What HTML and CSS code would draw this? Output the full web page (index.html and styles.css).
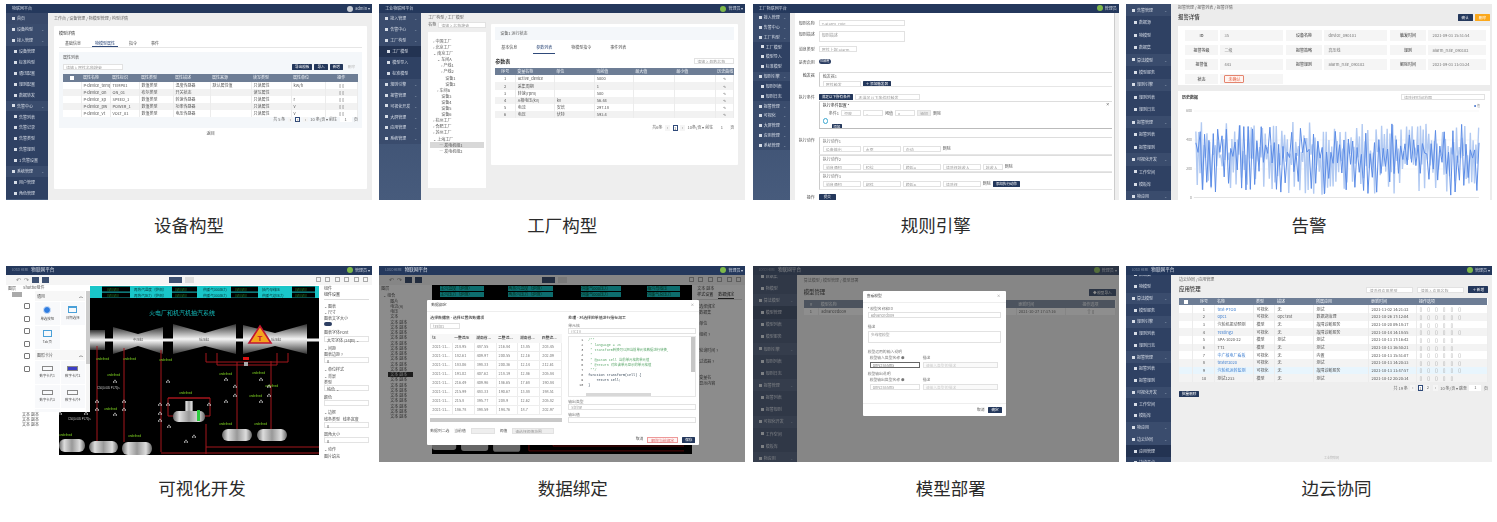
FILE: index.html

```html
<!DOCTYPE html>
<html lang="zh-CN">
<head>
    <meta charset="UTF-8">
    <meta name="viewport" content="width=device-width, initial-scale=1.0">
    <title>平台功能</title>
    <link rel="stylesheet" href="styles.css">
</head>
<body>
<div class="gallery">

    <!-- 设备构型 -->
    <figure class="tile">
        <div class="shot">
            <div class="topbar"><span class="logo">物联网平台</span><span class="user"><i class="avatar grey"></i>admin ▾</span></div>
            <div class="frame">
                <div class="side">
                    <div class="side-item">首页</div>
                    <div class="side-item group">设备构型<b>⌄</b></div>
                    <div class="side-item group">接入管理<b>⌄</b></div>
                    <div class="side-item sub">设备管理</div>
                    <div class="side-item sub">标准构型</div>
                    <div class="side-item sub">通讯配置</div>
                    <div class="side-item sub">规则配置</div>
                    <div class="side-item sub">数据转发</div>
                    <div class="side-item group">告警中心<b>⌄</b></div>
                    <div class="side-item sub">告警列表</div>
                    <div class="side-item sub">告警记录</div>
                    <div class="side-item sub">告警类型</div>
                    <div class="side-item sub">告警规则</div>
                    <div class="side-item sub">1 告警设置</div>
                    <div class="side-item group">系统管理<b>⌄</b></div>
                    <div class="side-item sub">用户管理</div>
                    <div class="side-item sub">角色管理</div>
                </div>
                <div class="main m-device">
                    <div class="crumb">工作台 / 设备管理 / 物模型管理 / 构型详情</div>
                    <div class="card">
                        <div class="card-title">模型详情</div>
                        <div class="tabs"><span>基础信息</span><span class="on">物模型属性</span><span>指令</span><span>事件</span></div>
                        <div class="panel">
                            <div class="panel-title">属性列表</div>
                            <div class="tools">
                                <span class="input w60">请输入属性名称搜索</span>
                                <span class="spacer"></span>
                                <span class="btn">导出模板</span><span class="btn">导入</span><span class="btn">新增</span><span class="btn plain">删除</span>
                            </div>
                            <table class="grid props-table">
                                <tr><th class="chk"><i class="box"></i></th><th>属性名称</th><th>属性标识</th><th>属性类型</th><th>属性描述</th><th>属性来源</th><th>读写类型</th><th>属性单位</th><th class="mid">操作</th></tr>
                                <tr><td class="chk"></td><td>P-device_temp</td><td>TEMP01</td><td>数值类型</td><td>温度传感器</td><td>默认属性值</td><td>只读属性</td><td>kW/h</td><td class="mid">▯ ▯</td></tr>
                                <tr><td class="chk"></td><td>P-device_on</td><td>ON_01</td><td>布尔类型</td><td>开关状态</td><td></td><td>读写属性</td><td></td><td class="mid">▯ ▯</td></tr>
                                <tr><td class="chk"></td><td>P-device_sp</td><td>SPEED_1</td><td>数值类型</td><td>转速传感器</td><td></td><td>只读属性</td><td>r</td><td class="mid">▯ ▯</td></tr>
                                <tr><td class="chk"></td><td>P-device_pw</td><td>POWER_1</td><td>数值类型</td><td>功率传感器</td><td></td><td>只读属性</td><td>v</td><td class="mid">▯ ▯</td></tr>
                                <tr><td class="chk"></td><td>P-device_vt</td><td>VOLT_01</td><td>数值类型</td><td>电压传感器</td><td></td><td>只读属性</td><td>v</td><td class="mid">▯ ▯</td></tr>
                            </table>
                            <div class="pager">共 5 条 <i>‹</i><i class="cur">1</i><i>›</i> 10 条/页 ▾ 前往 <i class="w12">1</i> 页</div>
                        </div>
                        <div class="center-link">返回</div>
                    </div>
                </div>
            </div>
        </div>
        <figcaption>设备构型</figcaption>
    </figure>

    <!-- 工厂构型 -->
    <figure class="tile">
        <div class="shot">
            <div class="topbar"><span class="logo">工业物联网平台</span><span class="user"><i class="avatar"></i>管理员 ▾</span></div>
            <div class="frame">
                <div class="side">
                    <div class="side-item group">接入管理<b>⌄</b></div>
                    <div class="side-item group">告警中心<b>⌄</b></div>
                    <div class="side-item group">工厂构型<b>⌄</b></div>
                    <div class="side-item sub dark">工厂模型</div>
                    <div class="side-item sub">模型导入</div>
                    <div class="side-item sub">标准模型</div>
                    <div class="side-item group">规则引擎<b>⌄</b></div>
                    <div class="side-item group">报警管理<b>⌄</b></div>
                    <div class="side-item group">可视化开发<b>⌄</b></div>
                    <div class="side-item group">大屏管理<b>⌄</b></div>
                    <div class="side-item group">应用管理<b>⌄</b></div>
                    <div class="side-item group">系统管理<b>⌄</b></div>
                </div>
                <div class="main m-factory">
                    <div class="tree-col">
                        <div class="crumb">工厂构型 / 工厂模型</div>
                        <div class="tree-search"><span>名称</span><span class="input">请输入名称搜索</span></div>
                        <ul class="tree">
                            <li>› 中国工厂</li><li>› 北京工厂</li><li>⌄ 南京工厂</li>
                            <li class="l2">⌄ 车间A</li><li class="l3">› 产线1</li><li class="l3">› 产线2</li>
                            <li class="l4">设备1</li><li class="l4">设备2</li><li class="l2">› 车间B</li>
                            <li class="l3">设备3</li><li class="l3">设备4</li><li class="l3">设备5</li><li class="l3">设备6</li>
                            <li>› 杭州工厂</li><li>› 合肥工厂</li><li>› 苏州工厂</li><li>⌄ 上海工厂</li>
                            <li class="l1 sel">— 发电机组1</li><li class="l1">— 发电机组2</li>
                        </ul>
                    </div>
                    <div class="card">
                        <div class="strip">设备1 运行状态</div>
                        <div class="tabs wide"><span>基本信息</span><span class="on">参数列表</span><span>物模型指令</span><span>事件列表</span></div>
                        <div class="table-head"><strong>参数表</strong><span class="spacer"></span><span class="input w40">请输入参数名称</span></div>
                        <table class="grid tall">
                            <tr><th class="n">序号</th><th>变量名称</th><th>单位</th><th>当前值</th><th>最大值</th><th>最小值</th><th class="mid">历史曲线</th></tr>
                            <tr><td class="n">1</td><td>active_device</td><td></td><td>5000</td><td></td><td></td><td class="mid">∿</td></tr>
                            <tr><td class="n">2</td><td>采集周期</td><td></td><td>1</td><td></td><td></td><td class="mid">∿</td></tr>
                            <tr><td class="n">3</td><td>转速(rpm)</td><td></td><td>500</td><td></td><td></td><td class="mid">∿</td></tr>
                            <tr><td class="n">4</td><td>A相电压(kV)</td><td>kv</td><td>56.44</td><td></td><td></td><td class="mid">∿</td></tr>
                            <tr><td class="n">5</td><td>电流</td><td>安培</td><td>297.18</td><td></td><td></td><td class="mid">∿</td></tr>
                            <tr><td class="n">6</td><td>电压</td><td>伏特</td><td>593.4</td><td></td><td></td><td class="mid">∿</td></tr>
                        </table>
                        <div class="pager">共6条 <i>‹</i><i class="cur">1</i><i>›</i> 10条/页 ▾ 前往 <i class="w12">1</i> 页</div>
                    </div>
                </div>
            </div>
        </div>
        <figcaption>工厂构型</figcaption>
    </figure>

    <!-- 规则引擎 -->
    <figure class="tile">
        <div class="shot">
            <div class="topbar thin"><span class="logo">工厂物联网平台</span><span class="user"><i class="avatar"></i>管理员</span></div>
            <div class="frame">
                <div class="side narrow">
                    <div class="side-item group">接入管理<b>⌄</b></div>
                    <div class="side-item group">告警中心<b>⌄</b></div>
                    <div class="side-item group">工厂构型<b>⌄</b></div>
                    <div class="side-item sub">工厂模型</div>
                    <div class="side-item sub">模型导入</div>
                    <div class="side-item sub">标准模型</div>
                    <div class="side-item group">规则引擎<b>⌄</b></div>
                    <div class="side-item sub">规则列表</div>
                    <div class="side-item sub">规则日志</div>
                    <div class="side-item group">报警管理<b>⌄</b></div>
                    <div class="side-item group">可视化<b>⌄</b></div>
                    <div class="side-item group">大屏管理<b>⌄</b></div>
                    <div class="side-item group">应用管理<b>⌄</b></div>
                    <div class="side-item group">系统管理<b>⌄</b></div>
                </div>
                <div class="main m-rule">
                    <div class="form">
                        <div class="f-row gap5"><label>规则名称</label><span class="input w85">T-alarm_rule</span></div>
                        <div class="f-row gap4"><label>规则描述</label><span class="input w85 area">规则描述</span></div>
                        <div class="f-row gap7"><label>消息类型</label><span class="input w38">属性上报 alarm</span></div>
                        <div class="f-row gap7"><label>是否启用</label><span class="toggle">已启用</span></div>
                        <div class="f-row gap7"><label>触发器</label>
                            <div class="rule-box h15"><div class="mini">触发器1</div><div class="f-line"><span class="input w38">属性触发</span><span class="btn">＋ 添加触发器</span></div></div>
                        </div>
                        <div class="f-row gap1"><label>执行条件</label><span class="btn">满足以下所有条件</span><span class="input w65">不满足以下条件时触发 ⌄</span></div>
                        <div class="f-row gap8"><label></label>
                            <div class="rule-box h28">
                                <div class="mini dark">执行条件配置 * <b class="close">×</b></div>
                                <div class="f-line cond"><span class="plainlabel">条件1</span><span class="input w20">温度</span><span class="input w20">=</span><span class="plainlabel">阈值</span><span class="input w20">0</span><span class="input w14 grey">添加</span><span class="plainlabel">删除</span></div>
                                <div class="dot"></div>
                                <span class="btn add">添加</span>
                            </div>
                        </div>
                        <div class="f-row gap0"><label>执行动作</label>
                            <div class="rule-box h18"><div class="mini">执行动作1</div><div class="f-line"><span class="input w38">设备输出</span><span class="input w38">水泵</span><span class="input w38">启动</span><span class="plainlabel">删除</span></div></div>
                        </div>
                        <div class="f-row gap0"><label></label>
                            <div class="rule-box h17"><div class="mini">执行动作2</div><div class="f-line"><span class="input w38">消息通知</span><span class="input w38">短信</span><span class="input w38">模板A</span><span class="input w38">请选择接收人</span><span class="input w20">接收人</span><span class="plainlabel">删除</span></div></div>
                        </div>
                        <div class="f-row gap4"><label></label>
                            <div class="rule-box h18"><div class="mini">执行动作3</div><div class="f-line"><span class="input w38">消息通知</span><span class="input w38">邮件</span><span class="input w38">模板B</span><span class="input w38">请选择</span><span class="plainlabel">删除</span><span class="btn">添加执行动作</span></div></div>
                        </div>
                        <div class="f-row gap0"><label>操作</label><span class="btn wide-btn">提交</span></div>
                    </div>
                </div>
            </div>
        </div>
        <figcaption>规则引擎</figcaption>
    </figure>

    <!-- 告警 -->
    <figure class="tile">
        <div class="shot">
            <div class="frame full">
                <div class="side tall">
                    <div class="side-item group">告警管理<b>⌄</b></div>
                    <div class="side-item sub">数据源</div>
                    <div class="side-item sub">物模型</div>
                    <div class="side-item sub">数据集</div>
                    <div class="side-item group">算法模型<b>⌄</b></div>
                    <div class="side-item sub">模型服务</div>
                    <div class="side-item group">规则引擎<b>⌄</b></div>
                    <div class="side-item sub">规则列表</div>
                    <div class="side-item sub">规则日志</div>
                    <div class="side-item group">报警管理<b>⌄</b></div>
                    <div class="side-item sub">报警列表</div>
                    <div class="side-item sub">报警规则</div>
                    <div class="side-item group">可视化开发<b>⌄</b></div>
                    <div class="side-item sub">工作空间</div>
                    <div class="side-item sub">模板库</div>
                    <div class="side-item group">物应用<b>⌄</b></div>
                </div>
                <div class="main m-alarm">
                    <div class="crumb">报警管理 / 报警列表 / 报警详情</div>
                    <div class="page-head"><h3>报警详情</h3><span class="spacer"></span><span class="btn big">确认</span><span class="btn big orange">删除</span></div>
                    <div class="info-card">
                        <span class="k">ID</span><span class="v">35</span><span class="k">设备名称</span><span class="v">device_090101</span><span class="k">触发时间</span><span class="v">2021-09-03 15:51:54</span>
                        <span class="k">报警等级</span><span class="v">二级</span><span class="k">报警策略</span><span class="v">高压线</span><span class="k">规则</span><span class="v">alarm_rule_090102</span>
                        <span class="k">报警值</span><span class="v">443</span><span class="k">报警规则</span><span class="v">alarm_rule_090102</span><span class="k">解除时间</span><span class="v">2021-09-03 11:03:24</span>
                        <span class="k">状态</span><span class="v"><em class="tag">未确认</em></span>
                    </div>
                    <div class="chart-card">
                        <div class="chart-head"><strong>历史数据</strong><span class="spacer"></span><span class="input date">请选择时间范围</span></div>
                        <svg id="alarm-chart" class="chart" viewBox="0 0 306 92" preserveAspectRatio="none">
                            <line class="axis" x1="12" y1="3" x2="300" y2="3"/><line class="axis" x1="12" y1="32" x2="300" y2="32"/><line class="axis" x1="12" y1="61" x2="300" y2="61"/><line class="axis dark" x1="12" y1="89.5" x2="300" y2="89.5"/>
                            <text x="10" y="4.5" class="tick">600</text><text x="10" y="33.5" class="tick">400</text><text x="10" y="62.5" class="tick">200</text><text x="10" y="91" class="tick">0</text>
                            <circle cx="296" cy="-2" r="1"/><text x="298" y="-1" class="legend">值</text>
                            <polyline id="series-light" class="series light" points=""/>
                            <polyline id="series-main" class="series" points=""/>
                        </svg>
                    </div>
                </div>
            </div>
        </div>
        <figcaption>告警</figcaption>
    </figure>

    <!-- 可视化开发 -->
    <figure class="tile">
        <div class="shot white">
            <div class="topbar thin"><span class="logo brand"><small>LOGO HERE</small>物联网平台</span><span class="user"><i class="avatar"></i>管理员 ▾</span></div>
            <div class="editbar"><span>↶</span><span>↷</span><i class="ebtn"></i><i class="ebtn"></i><span class="spacer"></span><i class="ebtn mid"></i><i class="ebtn mid pale"></i><span class="spacer"></span><i class="eicon"></i><i class="eicon"></i><i class="eicon"></i><i class="eicon"></i><i class="eicon"></i><i class="eicon"></i></div>
            <div class="studio">
                <div class="layers">
                    <div class="layers-title">图层</div>
                    <div class="layers-chip"></div>
                    <div class="layers-foot">文本 副本<br>文本 副本<br>文本 副本</div>
                </div>
                <svg class="scene" viewBox="0 0 260 169">
                    <defs>
                        <linearGradient id="metal" x1="0" y1="0" x2="0" y2="1"><stop offset="0" stop-color="#333"/><stop offset=".5" stop-color="#f4f4f4"/><stop offset="1" stop-color="#333"/></linearGradient>
                        <linearGradient id="tank" x1="0" y1="0" x2="1" y2="0"><stop offset="0" stop-color="#666"/><stop offset=".2" stop-color="#ddd"/><stop offset=".5" stop-color="#999"/><stop offset=".8" stop-color="#ddd"/><stop offset="1" stop-color="#666"/></linearGradient>
                        <g id="valve"><path d="M-1.8-1.1 0 0-1.8 1.1ZM1.8-1.1 0 0 1.8 1.1Z" fill="#ddd"/><rect x="-.6" y="-2.2" width="1.2" height="1.2" fill="#ddd"/></g>
                    </defs>
                    <rect width="260" height="169" fill="#000"/>
                    <g class="strip-band">
                        <rect x="31" width="229" height="12" fill="#19c6c9"/>
                        <rect x="43" y=".6" width="28" height="5" fill="#000"/><rect x="43" y="6.6" width="28" height="5" fill="#000"/>
                        <rect x="113" y=".6" width="25" height="5" fill="#000"/><rect x="113" y="6.6" width="25" height="5" fill="#000"/>
                        <rect x="172" y=".6" width="27" height="5" fill="#000"/><rect x="172" y="6.6" width="27" height="5" fill="#000"/>
                        <rect x="233" y=".6" width="23" height="5" fill="#000"/><rect x="233" y="6.6" width="23" height="5" fill="#000"/>
                        <text x="75" y="4.8" class="st">再热汽温度（炉侧）</text><text x="75" y="10.8" class="st">再热汽压力（炉侧）</text>
                        <text x="144" y="4.8" class="st">供暖气000压力</text><text x="144" y="10.8" class="st">供暖气000压力</text>
                        <text x="203" y="4.8" class="st">抽汽母线压</text><text x="203" y="10.8" class="st">供暖气总压力</text>
                        <text x="48" y="4.8" class="sg">#######</text><text x="48" y="10.8" class="sg">#######</text>
                        <text x="116" y="4.8" class="sg">#######</text><text x="116" y="10.8" class="sg">#######</text>
                        <text x="176" y="4.8" class="sg">#######</text><text x="176" y="10.8" class="sg">#######</text>
                        <text x="236" y="4.8" class="sg">#######</text><text x="236" y="10.8" class="sg">#######</text>
                    </g>
                    <text x="90" y="29" class="title">火电厂和机汽机抽汽系统</text>
                    <rect x="30" y="52.5" width="230" height="3" fill="#eee"/>
                    <path d="M30 44H46V64H30Z" fill="url(#metal)"/>
                    <path d="M54 41 79 48 104 41V68L79 60 54 68Z" fill="url(#metal)"/>
                    <path d="M114 38 146 47 177 38V68L146 60 114 68Z" fill="url(#metal)"/>
                    <path d="M184 39 216 47 248 38V68L216 60 184 68Z" fill="url(#metal)"/>
                    <text x="74" y="55" class="lbl">中压缸</text><text x="140" y="55" class="lbl">低压缸</text><text x="212" y="55" class="lbl">低压缸</text>
                    <g class="pipes">
                        <path d="M38 60V156M65 62V156M102 64V166M178 76V144M212 75V144M147 138V168M102 167H260M147 161H260"/>
                        <path d="M147 76H229V67M147 76V67M158 67V79H218V67M109 112V130H151V112ZM109 112H151"/>
                    </g>
                    <rect x="184" y="71" width="6" height="3" fill="#d11"/><rect x="185" y="76" width="4" height="4" fill="#aaa"/>
                    <path d="M201 40 190 57H212Z" fill="#f5a31c" stroke="#c01530" stroke-width="1.6"/>
                    <text x="201" y="55" class="warn">T</text>
                    <g class="tanks">
                        <rect x="126" y="115" width="8" height="10" fill="url(#tank)"/>
                        <rect x="114" y="125" width="32" height="11" rx="5" fill="url(#tank)"/>
                        <rect x="163" y="143" width="30" height="12" rx="6" fill="url(#tank)"/><rect x="198" y="143" width="30" height="12" rx="6" fill="url(#tank)"/>
                        <rect x="0" y="153" width="26" height="13" rx="6" fill="url(#tank)"/><rect x="30" y="155" width="29" height="12" rx="6" fill="url(#tank)"/><rect x="63" y="156" width="30" height="13" rx="6" fill="url(#tank)"/>
                        <rect x="138" y="124" width="3" height="11" fill="#2ecc40"/>
                    </g>
                    <g class="und">
                        <text x="37" y="74">undefined</text><text x="64" y="74">undefined</text><text x="100" y="75">undefined</text><text x="48" y="90">undefined</text><text x="160" y="89">undefined</text><text x="193" y="88">undefined</text><text x="120" y="108">undefined</text><text x="190" y="111">undefined</text><text x="206" y="101">undefined</text><text x="45" y="124">undefined</text><text x="160" y="139">undefined</text><text x="195" y="139">undefined</text><text x="0" y="150">undefined</text><text x="69" y="151">undefined</text>
                    </g>
                    <g class="tiny"><text x="38" y="103">C50(0.005 PL75)s</text><text x="9" y="134">C50(0.005 PL75)s</text></g>
                    <use href="#valve" x="56" y="96"/><use href="#valve" x="109" y="96"/><use href="#valve" x="167" y="94"/><use href="#valve" x="202" y="94"/><use href="#valve" x="176" y="101"/><use href="#valve" x="176" y="110"/><use href="#valve" x="210" y="101"/><use href="#valve" x="210" y="110"/><use href="#valve" x="167" y="116"/><use href="#valve" x="202" y="116"/><use href="#valve" x="38" y="116"/><use href="#valve" x="65" y="116"/><use href="#valve" x="38" y="124"/><use href="#valve" x="65" y="124"/><use href="#valve" x="56" y="129"/><use href="#valve" x="1" y="128"/><use href="#valve" x="27" y="128"/><use href="#valve" x="101" y="119"/><use href="#valve" x="109" y="119"/><use href="#valve" x="101" y="128"/><use href="#valve" x="101" y="135"/><use href="#valve" x="150" y="119"/><use href="#valve" x="110" y="141"/><use href="#valve" x="135" y="151"/><use href="#valve" x="127" y="156"/>
                </svg>
                <div class="props">
                    <div class="props-title">组件</div>
                    <div class="props-tab">组件设置</div>
                    <p>⌄ 图表</p><p>⌄ 尺寸</p><p>图表文字大小</p><span class="switch"></span>
                    <p>图表字体Font</p><span class="pinput">大号字体 (24px) ⌄</span>
                    <p>⌄ 间距</p><p>图表边距 ?</p><span class="pinput">0</span>
                    <p>⌄ 单位样式</p><p>⌄ 背景</p><p>类型</p><span class="pinput">纯色 ⌄</span><p>颜色</p><span class="pinput none"></span>
                    <p>⌄ 边框</p><p>线条类型 &nbsp; 线条宽度</p><span class="pinput">0</span><p>圆角大小</p><span class="pinput">0</span>
                    <p>⌄ 动作</p><p>图片填充</p>
                </div>
            </div>
            <div class="palette">
                <div class="pal-title">Shuttle组件</div>
                <div class="pal-body">
                    <div class="pal-icons"><i></i><i></i><i></i><i></i><i></i><i></i></div>
                    <div class="pal-cards">
                        <div class="pal-sec">通用 <b>︿</b></div>
                        <div class="pal-grid">
                            <div class="pal-card"><span class="ic radio"></span>单选按钮</div>
                            <div class="pal-card"><span class="ic cal"></span>日期选择</div>
                            <div class="pal-card"><span class="ic txt"></span>Tab页</div>
                        </div>
                        <div class="pal-sec">图形卡片 <b>︿</b></div>
                        <div class="pal-grid">
                            <div class="pal-card"><span class="ic frm"></span>数字卡片1</div>
                            <div class="pal-card"><span class="ic frm blue"></span>数字卡片2</div>
                            <div class="pal-card"><span class="ic frm"></span>数字卡片3</div>
                            <div class="pal-card"><span class="ic frm"></span>数字卡片4</div>
                            <div class="pal-card"><span class="ic txt"></span></div>
                        </div>
                    </div>
                    <div class="pal-bar"></div>
                </div>
            </div>
        </div>
        <figcaption class="cap-studio">可视化开发</figcaption>
    </figure>

    <!-- 数据绑定 -->
    <figure class="tile">
        <div class="shot white">
            <div class="topbar thin"><span class="logo brand"><small>LOGO HERE</small>物联网平台</span><span class="user"><i class="avatar"></i>管理员 ▾</span></div>
            <div class="editbar"><span>↶</span><span>↷</span><i class="ebtn"></i><i class="ebtn"></i><span class="spacer"></span><i class="ebtn mid"></i><i class="ebtn mid pale"></i><span class="spacer"></span><i class="eicon"></i><i class="eicon"></i><i class="eicon"></i><i class="eicon"></i><i class="eicon"></i><i class="eicon"></i></div>
            <div class="studio bind">
                <div class="layers wide">
                    <div class="layers-title">图层</div>
                    <ul class="layer-list">
                        <li class="root">⌄ 组合</li><li>图片</li><li>电流(A)</li><li>电压</li><li>文本</li><li>文本 副本</li><li>文本 副本</li><li>文本 副本</li><li>文本 副本</li><li>文本 副本</li><li>文本 副本</li><li>文本 副本</li><li>文本 副本</li><li>文本 副本</li><li>文本 副本</li><li class="sel">文本 副本</li><li>文本 副本</li><li>文本 副本</li><li>文本 副本</li><li>文本 副本</li><li>文本 副本</li><li>文本 副本</li><li>文本 副本</li><li>文本 副本</li>
                    </ul>
                </div>
                <div class="bind-canvas">
                    <div class="teal-row"><span>主汽温度（炉侧）</span><i></i><span>再热汽温度（炉侧）</span><i></i><span>供暖气000压力</span><i></i><span>抽汽母线压</span><i></i></div>
                    <div class="teal-row"><span>主汽压力（炉侧）</span><i></i><span>再热汽压力（炉侧）</span><i></i><span>供暖气000压力</span><i></i><span>供暖气总压力</span><i></i></div>
                    <svg class="bind-foot" viewBox="0 0 260 12">
                        <rect x="0" y="0" width="25" height="9" rx="3" fill="#bbb"/><rect x="30" y="0" width="28" height="10" rx="3" fill="#bbb"/><rect x="63" y="1" width="28" height="10" rx="3" fill="#bbb"/>
                        <path d="M100 0V10H260M125 0V5H260" fill="none" stroke="#c11" stroke-width=".8"/>
                    </svg>
                </div>
                <div class="props bind-props">
                    <div class="props-title">文本 副本</div>
                    <div class="props-tab two"><span>样式设置</span><span class="on">数据绑定</span></div>
                    <p>选择绑定</p><p>数据集</p><br><p>单位</p><br><p>组织 ?</p><br><br><p>轮询时间 ?</p><br><p>过滤器 ?</p><br><br><p>变量名</p><p>显示内容</p>
                </div>
            </div>
            <div class="veil below-top"></div>
            <div class="dialog bind-dialog">
                <div class="d-title">数据绑定<b>×</b></div>
                <div class="d-cols">
                    <div class="d-left">
                        <h4>选择数据集 - 选择位置的数据项</h4>
                        <span class="input w30">test01</span>
                        <table class="grid data">
                            <tr><th>ts</th><th>一整流压</th><th>湖南省...</th><th>二整流...</th><th>湖南省...</th><th>四整流...</th></tr>
                            <tr><td>2021-11...</td><td>218.95</td><td>487.55</td><td>216.84</td><td>13.85</td><td>203.45</td></tr>
                            <tr><td>2021-11...</td><td>182.61</td><td>409.97</td><td>200.55</td><td>12.16</td><td>202.09</td></tr>
                            <tr><td>2021-11...</td><td>183.06</td><td>398.33</td><td>200.36</td><td>12.14</td><td>212.61</td></tr>
                            <tr><td>2021-11...</td><td>191.02</td><td>407.62</td><td>218.19</td><td>12.86</td><td>205.84</td></tr>
                            <tr><td>2021-11...</td><td>216.49</td><td>409.96</td><td>186.65</td><td>17.68</td><td>190.84</td></tr>
                            <tr><td>2021-11...</td><td>215.99</td><td>483.33</td><td>190.67</td><td>13.88</td><td>198.51</td></tr>
                            <tr><td>2021-11...</td><td>215.8</td><td>395.77</td><td>208.9</td><td>12.62</td><td>205.82</td></tr>
                            <tr><td>2021-11...</td><td>186.78</td><td>398.59</td><td>194.76</td><td>18.7</td><td>202.97</td></tr>
                        </table>
                        <div class="hbar"></div>
                        <div class="d-foot"><span>数据列二选</span><span>当前值</span><span class="input w24 grey"></span><span>阈值</span><span class="input w42 grey">请选择阈值范围</span></div>
                    </div>
                    <div class="d-right">
                        <h4>处理 - 对选择的单值进行指标加工</h4>
                        <div class="mini">单元格</div>
                        <span class="input full">{{C1}}</span>
                        <div class="editor">
<pre class="gutter">1
2
3
4
5
6
7
8
9
10</pre>
<pre class="code">/**
 * language = JS
 * transform转换可以把当前单元格数据进行转换,
 *
 * @param cell 当前单元格的单元值
 * @return 对应该单元显示的单元格值
 **/
<span>function transform(cell) {
    return cell;
}</span></pre>
                            <i class="scroll-v"></i><i class="scroll-h"></i>
                        </div>
                        <div class="mini">输出类型</div>
                        <span class="input full">String</span>
                        <div class="mini">输出值</div>
                        <span class="input full"></span>
                    </div>
                </div>
                <div class="d-actions"><span>取消</span><span class="btn-danger">解除当前绑定</span><span class="btn">保存</span></div>
            </div>
        </div>
        <figcaption class="cap-bind">数据绑定</figcaption>
    </figure>

    <!-- 模型部署 -->
    <figure class="tile">
        <div class="shot">
            <div class="topbar thin"><span class="logo brand"><small>LOGO HERE</small>物联网平台</span><span class="user"><i class="avatar"></i>管理员 ▾</span></div>
            <div class="frame">
                <div class="side wide">
                    <div class="side-item sub">数据集</div>
                    <div class="side-item sub">物模型</div>
                    <div class="side-item group">算法模型<b>⌄</b></div>
                    <div class="side-item sub dark">模型管理</div>
                    <div class="side-item sub">模型列表</div>
                    <div class="side-item sub">模型服务</div>
                    <div class="side-item group">规则引擎<b>⌄</b></div>
                    <div class="side-item sub">规则列表</div>
                    <div class="side-item sub">规则日志</div>
                    <div class="side-item group">报警管理<b>⌄</b></div>
                    <div class="side-item sub">报警列表</div>
                    <div class="side-item sub">报警规则</div>
                    <div class="side-item group">可视化开发<b>⌄</b></div>
                    <div class="side-item sub">工作空间</div>
                    <div class="side-item sub">模板库</div>
                    <div class="side-item group">物应用<b>⌄</b></div>
                </div>
                <div class="main m-list">
                    <div class="crumb">算法模型 / 模型管理 / 模型部署</div>
                    <div class="page-head"><h3>模型管理</h3><span class="spacer"></span><span class="btn big">◆ 模型导入</span></div>
                    <table class="grid list">
                        <tr><th class="n">#</th><th>模型名称</th><th></th><th></th><th>类型</th><th>更新时间</th><th class="mid">操作选项</th></tr>
                        <tr><td class="n">1</td><td>advanced009</td><td></td><td></td><td>部署</td><td>2021-10-27 17:37:16</td><td class="mid">⇧ ▯</td></tr>
                    </table>
                </div>
            </div>
            <div class="veil soft"></div>
            <div class="dialog model-dialog">
                <div class="d-title">查看模型<b>×</b></div>
                <div class="d-body">
                    <div class="mini">* 模型名称和ID</div>
                    <span class="input full">advanced009</span>
                    <div class="mini gap">描述</div>
                    <span class="input full area">多线程模型</span>
                    <div class="mini gap">模型运用的输入说明</div>
                    <div class="two-col"><div class="mini">模型输入类型名称 ⬢</div><div class="mini">描述</div></div>
                    <div class="two-col"><span class="input focus">only2555ms</span><span class="input pale">请输入类型的描述</span></div>
                    <div class="mini gap2">模型输出说明</div>
                    <div class="two-col"><div class="mini">模型输出类型名称 ⬢</div><div class="mini">描述</div></div>
                    <div class="two-col"><span class="input">only2555ms</span><span class="input pale">请输入类型的描述</span></div>
                </div>
                <div class="d-actions line"><span>取消</span><span class="btn">确定</span></div>
            </div>
        </div>
        <figcaption class="cap-model">模型部署</figcaption>
    </figure>

    <!-- 边云协同 -->
    <figure class="tile">
        <div class="shot">
            <div class="topbar thin"><span class="logo brand"><small>LOGO HERE</small>物联网平台</span><span class="user"><i class="avatar"></i>管理员 ▾</span></div>
            <div class="frame">
                <div class="side wide alt">
                    <div class="side-item sub">数据集</div>
                    <div class="side-item sub">物模型</div>
                    <div class="side-item group">算法模型<b>⌄</b></div>
                    <div class="side-item sub">模型服务</div>
                    <div class="side-item group">规则引擎<b>⌄</b></div>
                    <div class="side-item sub">规则列表</div>
                    <div class="side-item sub">规则日志</div>
                    <div class="side-item group">报警管理<b>⌄</b></div>
                    <div class="side-item sub">报警列表</div>
                    <div class="side-item sub">报警规则</div>
                    <div class="side-item group">可视化开发<b>⌄</b></div>
                    <div class="side-item sub">工作空间</div>
                    <div class="side-item sub">模板库</div>
                    <div class="side-item group">物应用<b>⌄</b></div>
                    <div class="side-item group">边云协同<b>⌄</b></div>
                    <div class="side-item sub dark">应用管理</div>
                    <div class="side-item sub">边缘节点</div>
                </div>
                <div class="main m-edge">
                    <div class="crumb">边云协同 / 应用管理</div>
                    <div class="page-head"><h3>应用管理</h3><span class="spacer"></span><span class="input w46 white-in">请选择应用类型 ⌄</span><span class="input w46 white-in">请输入应用名称</span><span class="btn big">＋ 新增</span></div>
                    <table class="grid edge">
                        <tr><th class="chk"><i class="box"></i></th><th class="n">序号</th><th>名称</th><th>类型</th><th>描述</th><th>所属应用</th><th>更新时间</th><th>操作选项</th></tr>
                        <tr><td class="chk"></td><td class="n">1</td><td class="link">test-PTOD</td><td>可视化</td><td>无</td><td>测试</td><td>2021-11-02 14:21:32</td><td class="acts">▯▯▯▯▯▯</td></tr>
                        <tr><td class="chk"></td><td class="n">2</td><td class="link">opc1</td><td>可视化</td><td>opc test</td><td>数据湖治理</td><td>2021-10-26 17:12:04</td><td class="acts">▯▯▯▯▯▯</td></tr>
                        <tr><td class="chk"></td><td class="n">3</td><td>汽轮机振动预测</td><td>模型</td><td>无</td><td>故障诊断服务</td><td>2021-10-20 09:18:17</td><td class="acts">▯▯▯▯▯</td></tr>
                        <tr><td class="chk"></td><td class="n">4</td><td class="link">Testing2</td><td>可视化</td><td>无</td><td>故障诊断服务</td><td>2021-10-14 14:18:55</td><td class="acts">▯▯▯▯▯▯</td></tr>
                        <tr><td class="chk"></td><td class="n">5</td><td>SPA-1020-22</td><td>模型</td><td>测试</td><td>测试</td><td>2021-10-13 17:16:42</td><td class="acts">▯▯▯▯▯</td></tr>
                        <tr><td class="chk"></td><td class="n">6</td><td>TT1</td><td>模型</td><td>无</td><td>测试</td><td>2021-10-13 16:50:21</td><td class="acts">▯▯▯▯▯</td></tr>
                        <tr><td class="chk"></td><td class="n">7</td><td class="link">中广核电厂看板</td><td>可视化</td><td>无</td><td>内置</td><td>2021-10-13 15:51:07</td><td class="acts">▯▯▯▯▯▯</td></tr>
                        <tr><td class="chk"></td><td class="n">8</td><td class="link">tester2020</td><td>可视化</td><td>无</td><td>测试</td><td>2021-10-13 14:20:33</td><td class="acts">▯▯▯▯▯▯</td></tr>
                        <tr class="hi"><td class="chk"></td><td class="n">9</td><td class="link">汽轮机运转监测</td><td>可视化</td><td>无</td><td>故障诊断服务</td><td>2021-10-13 11:47:57</td><td class="acts">▯▯▯▯▯▯</td></tr>
                        <tr><td class="chk"></td><td class="n">10</td><td>测试1233</td><td>模型</td><td>无</td><td>测试</td><td>2021-10-12 20:20:14</td><td class="acts">▯▯▯▯▯</td></tr>
                    </table>
                    <div class="pager">共 19 条 <i>‹</i><i class="cur">1</i><i>2</i><i>›</i> 10 条/页 ▾ 跳至 <i class="w12">1</i> 页</div>
                    <div class="edge-foot"><span class="btn">批量删除</span></div>
                    <div class="copy">工业物联网</div>
                </div>
            </div>
        </div>
        <figcaption class="cap-edge">边云协同</figcaption>
    </figure>

</div>
<script src="app.js"></script>
</body>
</html>
```

FILE: styles.css

```css
/* Reset */
* {
    margin: 0;
    padding: 0;
    box-sizing: border-box;
}

body {
    background: #fff;
    font-family: "Noto Sans CJK SC", "Liberation Sans", sans-serif;
    overflow: hidden;
}

/* Gallery */
.gallery {
    display: grid;
    grid-template-columns: repeat(4, 366px);
    column-gap: 7.33px;
    row-gap: 0;
    padding: 4px 0 0 6px;
}

.tile {
    height: 262px;
}

.tile figcaption {
    margin-top: 12px;
    font-size: 17.5px;
    line-height: 26px;
    text-align: center;
    color: #2b2b2b;
}

/* Lower row captions sit off centre in the original */
.tile .cap-studio {
    margin-top: 13px;
    padding-left: 26px;
}

.tile .cap-bind {
    margin-top: 13px;
    padding-left: 21px;
}

.tile .cap-model {
    margin-top: 13px;
    padding-left: 30px;
}

.tile .cap-edge {
    margin-top: 13px;
    padding-left: 55px;
}

.shot {
    position: relative;
    width: 366px;
    height: 196px;
    overflow: hidden;
    display: flex;
    flex-direction: column;
    background: #eee;
    font-size: 4px;
    line-height: 1.2;
    color: #555;
    white-space: nowrap;
    filter: blur(.35px);
}

.shot.white {
    background: #fff;
}

/* Shared bits */
.spacer {
    flex: 1;
}

.topbar {
    flex: none;
    height: 9px;
    display: flex;
    align-items: center;
    justify-content: space-between;
    padding: 0 2px 0 6px;
    background: #24385c;
    color: #cfd6e2;
    font-size: 4px;
}

.topbar.thin {
    height: 8.5px;
}

.logo small {
    font-size: 3px;
    color: #8c99ae;
    margin-right: 3px;
}

.brand {
    font-size: 4.6px;
    color: #dfe4ec;
}

.user {
    display: flex;
    align-items: center;
    gap: 2px;
}

.avatar {
    width: 6px;
    height: 6px;
    border-radius: 50%;
    background: #7eb84a;
}

.avatar.grey {
    background: #c5cbd4;
}

.frame {
    flex: 1;
    display: flex;
    min-height: 0;
}

.frame.full {
    height: 196px;
}

/* Sidebar */
.side {
    flex: none;
    width: 42px;
    overflow: hidden;
    background: linear-gradient(#34486b, #475b7c);
    color: #d7dde7;
}

.side-item {
    position: relative;
    display: flex;
    align-items: center;
    height: 10.95px;
    padding-left: 11px;
    background: #38496a;
}

.side-item::before {
    content: "";
    position: absolute;
    left: 6px;
    width: 3px;
    height: 3px;
    background: #d7dde7;
}

.side-item.group {
    background: #3a4c6d;
}

.side-item.group b {
    position: absolute;
    right: 4px;
    font-weight: normal;
    color: #8e9bb1;
}

.side-item.sub {
    background: #2f4163;
    padding-left: 13px;
}

.side-item.sub::before {
    left: 8px;
}

.side-item.dark {
    background: #233352;
}

.side.narrow {
    width: 37px;
}

.side.narrow .side-item {
    height: 9.85px;
}

.side.tall {
    width: 45px;
}

.side.tall .side-item {
    height: 12.45px;
}

.side.wide {
    width: 44px;
}

.side.wide .side-item {
    height: 12.15px;
}

.side.wide .side-item:first-child {
    margin-top: -4.5px;
}

.side.wide.alt {
    width: 45px;
}

.side.wide.alt .side-item {
    height: 11.75px;
}

.side.wide.alt .side-item:first-child {
    margin-top: -5.5px;
}

.main {
    flex: 1;
    min-width: 0;
    overflow: hidden;
}

.crumb {
    color: #666;
}

.card {
    background: #fff;
    border-radius: 1px;
}

.input {
    display: inline-block;
    height: 6px;
    line-height: 6px;
    padding: 0 2px;
    background: #fff;
    border: .4px solid #e2e2e2;
    color: #999;
    overflow: hidden;
}

.input.w14 { width: 14px; }
.input.w20 { width: 20px; }
.input.w24 { width: 24px; }
.input.w30 { width: 30px; }
.input.w38 { width: 38px; }
.input.w40 { width: 40px; }
.input.w42 { width: 42px; }
.input.w46 { width: 47px; }
.input.w60 { width: 60px; }
.input.w65 { width: 65px; }
.input.w85 { width: 86px; }
.input.full { display: block; width: 100%; }
.input.grey { background: #eee; }

.btn {
    display: inline-block;
    height: 6px;
    line-height: 6px;
    padding: 0 3px;
    background: #24385c;
    color: #fff;
    border-radius: .5px;
    font-size: 3.6px;
}

.btn.plain {
    background: none;
    color: #bbb;
}

.btn.big {
    height: 7px;
    line-height: 7px;
    padding: 0 4px;
}

.btn.orange {
    background: #fba81c;
}

.tabs {
    display: flex;
    gap: 14px;
    padding: 0 8px;
    border-bottom: .5px solid #e6e6e6;
}

.tabs span {
    padding: 2px 3px;
}

.tabs .on {
    color: #2f4a7a;
    border-bottom: .7px solid #2f4a7a;
}

.pager {
    display: flex;
    align-items: center;
    justify-content: flex-end;
    gap: 2.5px;
    height: 9px;
    color: #666;
}

.pager i {
    display: inline-block;
    min-width: 5px;
    height: 5.5px;
    line-height: 5.5px;
    text-align: center;
    font-style: normal;
    background: #f5f5f5;
}

.pager .cur {
    background: #fff;
    border: .4px solid #2f4a7a;
}

.pager .w12 {
    width: 12px;
    background: #fff;
}

/* Tables */
.grid {
    width: 100%;
    border-collapse: collapse;
    table-layout: fixed;
    background: #fff;
}

.grid th {
    height: 7px;
    padding: 0 2px;
    background: #6d7d95;
    color: #eef1f5;
    font-weight: normal;
    text-align: left;
    overflow: hidden;
}

.grid td {
    height: 7px;
    padding: 0 2px;
    overflow: hidden;
    border-right: .3px solid #ececec;
}

.grid tr:nth-child(odd) td {
    background: #f2f2f2;
}

.grid .chk {
    width: 18px;
    text-align: center;
}

.grid .n {
    width: 15px;
    text-align: center;
}

.grid .mid {
    text-align: center;
}

.box {
    display: inline-block;
    width: 4px;
    height: 4px;
    background: #fff;
    vertical-align: middle;
}

/* 设备构型 */
.m-device {
    padding: 3px 5px 0 6px;
}

.m-device .crumb {
    height: 10px;
    line-height: 5px;
}

.m-device .card {
    height: 163px;
    padding: 3px 5px;
}

.card-title {
    height: 11px;
    line-height: 9px;
    color: #333;
}

.m-device .tabs {
    height: 8px;
    padding: 0 3px;
    gap: 8px;
}

.m-device .tabs span {
    padding: 1px 3px 0;
}

.panel {
    margin-top: 4px;
    height: 76px;
    padding: 3px 4px 0;
    background: #f4f7fa;
}

.panel-title {
    height: 9px;
}

.tools {
    display: flex;
    gap: 2px;
    height: 10px;
}

.props-table th:nth-child(2) { width: 29px; }
.props-table th:nth-child(3) { width: 29px; }
.props-table th:nth-child(4) { width: 34px; }
.props-table th:nth-child(5) { width: 37px; }
.props-table th:nth-child(6) { width: 41px; }
.props-table th:nth-child(7) { width: 40px; }
.props-table th:nth-child(8) { width: 34px; }

.props-table th {
    height: 7.5px;
}

.panel .pager {
    margin-top: -1.5px;
}

.center-link {
    margin-top: 3px;
    text-align: center;
}

/* 工厂构型 */
.m-factory {
    display: flex;
    gap: 5px;
    padding: 2px 7px 0 7px;
}

.tree-col {
    flex: none;
    width: 58px;
}

.tree-col .crumb {
    height: 7px;
}

.tree-search {
    display: flex;
    gap: 2px;
    height: 10px;
}

.tree-search .input {
    flex: 1;
}

.tree {
    list-style: none;
    background: #fff;
    height: 156px;
    padding: 6px 2px;
}

.tree li {
    height: 6.1px;
    line-height: 6px;
    padding-left: 3px;
}

.tree .l1 { padding-left: 9px; }
.tree .l2 { padding-left: 7px; }
.tree .l3 { padding-left: 11px; }
.tree .l4 { padding-left: 15px; }
.tree .sel { background: #d8d8d8; }

.m-factory .card {
    flex: 1;
    height: 141px;
    margin-top: 9px;
    padding: 3px 4px;
}

.strip {
    height: 13px;
    line-height: 13px;
    padding-left: 5px;
    background: #f4f7fa;
}

.tabs.wide {
    height: 11px;
    margin-top: 3px;
    gap: 13px;
    border: 0;
    padding: 0 3px;
}

.table-head {
    display: flex;
    align-items: center;
    height: 14px;
    color: #333;
}

.table-head strong {
    font-size: 5px;
}

.grid.tall td, .grid.tall th {
    height: 7.2px;
}

.grid.tall .n {
    width: 20px;
}

.grid.tall th:nth-child(2) { width: 39px; }
.grid.tall th:nth-child(3) { width: 40px; }
.grid.tall th:nth-child(4) { width: 39px; }
.grid.tall th:nth-child(5) { width: 41px; }
.grid.tall th:nth-child(6) { width: 41px; }

.m-factory .pager {
    margin-top: 5px;
}

/* 规则引擎 */
.m-rule {
    background: #fff;
    margin: 0 4px 0 5px;
    border-right: 1px solid #ccc;
}

.form {
    padding: 7.5px 2px 0 0;
}

.f-row {
    display: flex;
    align-items: flex-start;
    gap: 2px;
    min-height: 6px;
}

.f-row.gap0 { margin-bottom: 0; }
.f-row.gap1 { margin-bottom: 1px; }
.f-row.gap4 { margin-bottom: 4px; }
.f-row.gap5 { margin-bottom: 5px; }
.f-row.gap7 { margin-bottom: 7px; }
.f-row.gap8 { margin-bottom: 8px; }

.f-row label {
    flex: none;
    width: 22px;
    line-height: 6px;
    text-align: right;
    padding-right: 2px;
}

.input.area {
    height: 11px;
}

.toggle {
    display: inline-block;
    width: 12px;
    height: 5px;
    line-height: 5px;
    text-align: center;
    border-radius: 3px;
    background: #2d3f63;
    color: #fff;
    font-size: 3px;
}

.rule-box {
    flex: 1;
    min-width: 0;
    padding: 1px 2px 0 3px;
    border-top: .4px solid #ddd;
    border-left: .4px solid #ccc;
    border-bottom: .4px solid #e6e6e6;
    position: relative;
    overflow: hidden;
}

.rule-box.h15 { height: 15px; }
.rule-box.h17 { height: 17px; }
.rule-box.h18 { height: 18px; }
.rule-box.h28 { height: 28px; border-bottom-color: #bbb; }

.mini {
    height: 5px;
    line-height: 5px;
    color: #777;
}

.mini.dark {
    color: #333;
}

.close {
    position: absolute;
    right: 2px;
    top: 0;
    font-weight: normal;
}

.f-line {
    display: flex;
    align-items: center;
    gap: 2px;
    margin-top: 1.5px;
}

.f-line.cond {
    margin-top: 2px;
    padding-left: 6px;
}

.plainlabel {
    color: #666;
}

.dot {
    width: 5.5px;
    height: 5.5px;
    margin-top: 2px;
    border-radius: 50%;
    border: 1.5px solid #3ba7d0;
}

.btn.add {
    display: block;
    width: 10px;
    height: 5px;
    line-height: 5px;
    margin: .5px 0 0 9px;
    padding: 0 1.5px;
}

.btn.wide-btn {
    padding: 0 5px;
}

/* 告警 */
.m-alarm {
    padding: 0 2px 0 7px;
    background: #ececec;
}

.m-alarm .crumb {
    height: 7px;
    line-height: 7px;
}

.page-head {
    display: flex;
    align-items: center;
    gap: 2px;
    height: 12px;
}

.m-alarm .page-head {
    margin-bottom: 3px;
}

.page-head h3 {
    font-size: 5.4px;
    font-weight: 500;
    color: #333;
}

.info-card {
    display: grid;
    grid-template-columns: 33px 63px 36px 63px 36px 1fr;
    column-gap: 2.5px;
    row-gap: 3px;
    height: 59px;
    padding: 4px 4px 0 7px;
    background: #fff;
    text-align: center;
}

.info-card span {
    height: 10.5px;
    line-height: 10.5px;
    background: #f5f5f5;
}

.info-card .k {
    color: #555;
    font-weight: 500;
}

.info-card .v {
    text-align: left;
    padding-left: 4px;
    color: #777;
}

.tag {
    font-style: normal;
    padding: 0 3px;
    border: .5px solid #e4846e;
    border-radius: 1px;
    color: #e4593a;
    background: #fff4f0;
}

.chart-card {
    height: 110px;
    margin-top: 6px;
    padding: 0 5px 0 4px;
    background: #fff;
}

.chart-head {
    display: flex;
    align-items: center;
    height: 12px;
    color: #333;
}

.input.date {
    width: 84px;
}

.chart {
    display: block;
    width: 100%;
    height: 92px;
    margin-top: 5.3px;
    overflow: visible;
}

.chart circle {
    fill: #3e6fc9;
}

.legend {
    font-size: 3px;
    fill: #888;
}

.axis {
    stroke: #eee;
    stroke-width: .4;
}

.axis.dark {
    stroke: #bbb;
}

.tick {
    font-size: 3.4px;
    fill: #888;
    text-anchor: end;
}

.series {
    fill: none;
    stroke: #5c8ce6;
    stroke-width: 1;
}

.series.light {
    stroke: #b2caf2;
    stroke-width: 1.4;
}

/* 可视化开发 */
.editbar {
    flex: none;
    height: 10px;
    display: flex;
    align-items: center;
    gap: 3px;
    padding: 0 4px 0 10px;
    background: #f5f5f5;
    color: #888;
    font-size: 6px;
}

.ebtn {
    width: 7px;
    height: 6px;
    background: #3e5172;
}

.ebtn.mid {
    width: 13px;
}

.ebtn.pale {
    width: 9px;
    background: #dcdcdc;
}

.eicon {
    width: 5px;
    height: 5px;
    margin-left: 1.5px;
    border: .5px solid #aaa;
}

.studio {
    flex: 1;
    display: flex;
    min-height: 0;
}

.layers {
    flex: none;
    width: 53px;
    padding: 1px 2px;
    background: #fff;
    position: relative;
}

.layers-chip {
    width: 10px;
    height: 5px;
    margin: 2px 0 0 4px;
    background: #aaa;
}

.layers-foot {
    position: absolute;
    left: 16px;
    top: 127px;
    line-height: 5px;
}

.scene {
    flex: none;
    width: 260px;
    height: 169px;
    margin-top: 1px;
}

.scene text {
    font-family: "Liberation Sans", "Noto Sans CJK SC", sans-serif;
}

.st {
    font-size: 3.6px;
    fill: #073b3b;
}

.sg {
    font-size: 3px;
    fill: #39c83e;
}

.scene .title {
    font-family: "Noto Sans CJK SC", serif;
    font-size: 6px;
    fill: #14b5b5;
}

.lbl {
    font-size: 3.4px;
    fill: #555;
}

.pipes path {
    fill: none;
    stroke: #a5171d;
    stroke-width: 1;
}

.warn {
    font-size: 8px;
    font-weight: bold;
    fill: #c01530;
    text-anchor: middle;
}

.und text {
    font-size: 3px;
    fill: #7ed321;
}

.tiny text {
    font-size: 2.8px;
    fill: #ccc;
}

.props {
    flex: 1;
    min-width: 0;
    padding: 1px 3px 0 5px;
    background: #fff;
    overflow: hidden;
}

.props p {
    height: 6.3px;
    line-height: 6.3px;
}

.props-title {
    height: 6px;
}

.props-tab {
    height: 8px;
    margin-bottom: 3px;
    border-bottom: .4px solid #ddd;
    color: #333;
}

.switch {
    display: block;
    width: 8px;
    height: 4px;
    margin: 1px 0 3px;
    border-radius: 2px;
    background: #2d3f63;
}

.pinput {
    display: block;
    height: 6px;
    line-height: 6px;
    margin-bottom: 3px;
    padding-left: 2px;
    border: .4px solid #e3e3e3;
}

/* Palette floats over the canvas */
.palette {
    position: absolute;
    left: 16px;
    top: 19px;
    width: 68px;
    height: 127px;
    background: #fff;
    overflow: hidden;
}

.pal-title {
    height: 6px;
    padding-left: 1px;
}

.pal-body {
    display: flex;
    height: 121px;
}

.pal-icons {
    flex: none;
    width: 12px;
    padding: 12px 0 0 2px;
}

.pal-icons i {
    display: block;
    width: 6px;
    height: 6px;
    margin-bottom: 6.5px;
    border: .5px solid #777;
    border-radius: 1px;
}

.pal-cards {
    flex: 1;
    padding: 0 1px;
}

.pal-sec {
    display: flex;
    justify-content: space-between;
    height: 10px;
    line-height: 10px;
    padding: 0 2px;
    background: #f7f7f7;
}

.pal-grid {
    display: grid;
    grid-template-columns: 1fr 1fr;
    gap: 1px;
    margin: 1px 0;
}

.pal-card {
    height: 23px;
    display: flex;
    flex-direction: column;
    align-items: center;
    justify-content: center;
    gap: 3px;
    background: #f8f9fb;
    font-size: 3.4px;
}

.ic {
    display: block;
    width: 9px;
    height: 7px;
}

.ic.radio {
    width: 8px;
    height: 8px;
    border-radius: 50%;
    background: #2f7de1;
    border: 1.6px solid #cfe0f8;
}

.ic.cal {
    border: 1px solid #4aa0d8;
    border-top-width: 2px;
}

.ic.txt {
    border: .8px solid #4aa0d8;
}

.ic.frm {
    width: 11px;
    height: 5px;
    border: .6px solid #888;
}

.ic.blue {
    background: #3d3fc6;
}

.pal-bar {
    flex: none;
    width: 4px;
    background: linear-gradient(#ccc 60%, #f5f5f5 60%);
}

/* 数据绑定 */
.layers.wide {
    width: 53px;
    padding-left: 2px;
}

.layer-list {
    list-style: none;
    margin-top: 3px;
}

.layer-list li {
    height: 5.25px;
    line-height: 5.25px;
    padding-left: 9px;
}

.layer-list .root {
    padding-left: 2px;
}

.layer-list .sel {
    width: 25px;
    margin-left: 7px;
    padding-left: 2px;
    background: #333;
    color: #ddd;
}

.bind-canvas {
    flex: none;
    display: flex;
    flex-direction: column;
    width: 260px;
    height: 169px;
    background: #000;
    padding: 1px 0 0 8px;
}

.bind-foot {
    width: 252px;
    height: 12px;
    margin-top: auto;
    margin-left: -8px;
    margin-bottom: 1px;
}

.teal-row {
    display: grid;
    grid-template-columns: 44px 24px 45px 28px 40px 26px 33px 27px;
    height: 5.5px;
    line-height: 5.5px;
    margin-bottom: .5px;
    background: #19c6c9;
    color: #053;
    overflow: hidden;
}

.teal-row i {
    background: #000;
}

.bind-props p {
    padding-left: 2px;
}

.props-tab.two {
    display: flex;
    gap: 5px;
}

.props-tab.two .on {
    border-bottom: .6px solid #333;
}

/* Modal backdrops */
.veil {
    position: absolute;
    inset: 0;
    background: rgba(0, 0, 0, .45);
}

.veil.below-top {
    top: 8.5px;
}

.veil.soft {
    background: rgba(50, 50, 50, .55);
}

.dialog {
    position: absolute;
    background: #fff;
    display: flex;
    flex-direction: column;
    border-radius: 1px;
    font-size: 3.8px;
}

.d-title {
    display: flex;
    justify-content: space-between;
    align-items: center;
    height: 12px;
    padding: 0 5px 0 4px;
    border-bottom: .4px solid #eee;
    color: #444;
}

.d-title b {
    font-weight: normal;
    color: #999;
}

.bind-dialog {
    left: 48px;
    top: 34px;
    width: 272px;
    height: 145px;
}

.d-cols {
    flex: 1;
    display: flex;
    gap: 6px;
    padding: 0 3px;
    min-height: 0;
}

.d-left {
    width: 132px;
    overflow: hidden;
}

.d-right {
    flex: 1;
    min-width: 0;
}

.d-cols h4 {
    height: 9px;
    line-height: 11px;
    font-size: 3.9px;
    font-weight: 500;
    color: #333;
}

.d-left .input {
    margin: 2px 0;
}

.grid.data {
    margin-top: 1px;
}

.grid.data th {
    height: 9px;
    background: #f7f7f7;
    color: #333;
    font-weight: 500;
}

.grid.data td {
    height: 9px;
    border-bottom: .3px solid #eee;
    color: #777;
}

.grid.data tr:nth-child(odd) td {
    background: #fff;
}

.hbar {
    height: 4px;
    margin-top: 3px;
    background: #c9c9c9;
}

.d-foot {
    display: flex;
    align-items: center;
    gap: 5px;
    margin-top: 4px;
}

.d-right .mini {
    margin-top: 2px;
}

.editor {
    position: relative;
    display: flex;
    gap: 5px;
    height: 61px;
    margin: 2px 0;
    padding-top: 1px;
    border: .4px solid #e6e6e6;
    overflow: hidden;
}

.gutter {
    width: 14px;
    font-size: 3.4px;
    line-height: 5px;
    text-align: right;
    color: #555;
    font-family: "Liberation Mono", monospace;
}

.code {
    font-family: "Liberation Mono", "Noto Sans CJK SC", monospace;
    font-size: 3.4px;
    line-height: 5px;
    color: #5aa76a;
}

.code span {
    color: #345;
}

.scroll-v {
    position: absolute;
    right: 0;
    top: 0;
    width: 4px;
    height: 35px;
    background: #c6c6c6;
}

.scroll-h {
    position: absolute;
    left: 17px;
    bottom: 0;
    width: 65px;
    height: 3px;
    background: #d8d8d8;
}

.d-actions {
    flex: none;
    display: flex;
    justify-content: flex-end;
    align-items: center;
    gap: 4px;
    height: 11px;
    padding-right: 4px;
}

.d-actions.line {
    height: 13px;
    border-top: .4px solid #eee;
}

.btn-danger {
    padding: 0 3px;
    height: 6px;
    line-height: 6px;
    border: .4px solid #e99;
    color: #d66;
    background: #fff3f3;
}

/* 模型部署 */
.m-list {
    padding: 3px 3px 0 7px;
}

.m-list .crumb {
    height: 9px;
}

.m-list .page-head {
    height: 12px;
    margin-bottom: 1.5px;
}

.grid.list th {
    height: 8px;
}

.model-dialog {
    left: 110px;
    top: 25px;
    width: 143px;
    height: 125px;
}

.d-body {
    flex: 1;
    padding: 3px 5px;
}

.d-body .mini {
    height: 6px;
    line-height: 6px;
}

.d-body .gap {
    margin-top: 6px;
}

.d-body .gap2 {
    margin-top: 3px;
}

.d-body .input.area {
    height: 12px;
    margin-top: 1px;
}

.two-col {
    display: grid;
    grid-template-columns: 50px 75px;
    gap: 3px;
    padding-left: 2px;
    margin-bottom: 1px;
}

.input.focus {
    border-color: #666;
    color: #777;
}

.input.pale {
    background: #fafafa;
    color: #ccc;
}

/* 边云协同 */
.m-edge {
    position: relative;
    padding: 2px 4px 0 8px;
}

.m-edge .crumb {
    height: 8px;
}

.m-edge .page-head {
    height: 10px;
    margin-bottom: 3.5px;
}

.input.white-in {
    margin-right: 2px;
}

.grid.edge th {
    height: 7.4px;
}

.grid.edge td {
    height: 7.67px;
}

.grid.edge .chk { width: 14px; }
.grid.edge .n { width: 22px; }
.grid.edge th:nth-child(3) { width: 39px; }
.grid.edge th:nth-child(4) { width: 21px; }
.grid.edge th:nth-child(5) { width: 39px; }
.grid.edge th:nth-child(6) { width: 55px; }
.grid.edge th:nth-child(7) { width: 48px; }

.grid.edge tr:nth-child(even) td {
    background: #fff;
}

.grid.edge tr:nth-child(odd) td {
    background: #f3f3f3;
}

.grid.edge tr.hi td {
    background: #e8f5fd;
}

.grid.edge .link {
    color: #3f7fd0;
}

.grid.edge .acts {
    font-family: "DejaVu Sans", sans-serif;
    font-size: 5px;
    letter-spacing: 5px;
    color: #999;
}

.m-edge .pager {
    height: 10px;
    margin-top: 1px;
}

.edge-foot {
    margin-top: -2px;
}

.copy {
    position: absolute;
    bottom: 1px;
    left: 0;
    right: 0;
    text-align: center;
    color: #bbb;
    font-size: 3px;
}
```

FILE: app.js

```js
// Draw the alarm history line with a small seeded generator
function spikes(seed, step) {
    let points = [];
    let value = seed;
    let high = true;
    for (let x = 14; x < 300; x += step) {
        value = (value * 16807) % 2147483647;
        let r = (value % 1000) / 1000;
        let y = high ? 14 + r * 34 : 44 + r * 44;
        points.push(x.toFixed(1) + "," + y.toFixed(1));
        high = !high;
    }
    return points.join(" ");
}

document.getElementById("series-light").setAttribute("points", spikes(4211, 1.4));
document.getElementById("series-main").setAttribute("points", spikes(90173, 2.2));
```
